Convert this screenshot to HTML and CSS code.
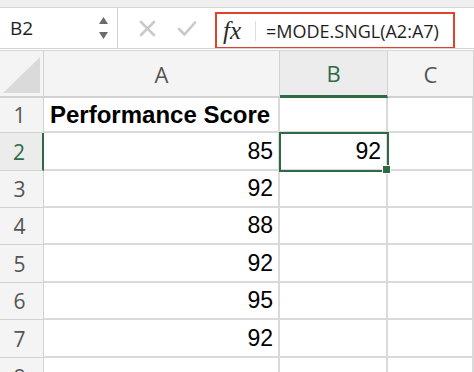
FILE: index.html
```html
<!DOCTYPE html>
<html lang="en">
<head>
    <meta charset="UTF-8">
    <title>MODE.SNGL</title>
    <link rel="stylesheet" href="styles.css">
</head>
<body>
    <div class="top-strip"></div>

    <div class="formula-bar">
        <div class="name-box">
            <span class="name">B2</span>
            <span class="spin">
                <svg width="11" height="26" viewBox="0 0 11 26">
                    <path d="M1 9 L5.5 2 L10 9 Z" fill="#6b6b6b"/>
                    <path d="M1 17 L5.5 24 L10 17 Z" fill="#6b6b6b"/>
                </svg>
            </span>
        </div>
        <div class="actions">
            <svg class="icon-x" width="17" height="17" viewBox="0 0 17 17">
                <path d="M2 2 L15 15 M15 2 L2 15" stroke="#c9c9c9" stroke-width="2.6" stroke-linecap="round"/>
            </svg>
            <svg class="icon-ok" width="20" height="17" viewBox="0 0 20 17">
                <path d="M2 9 L7.5 14.5 L18 2.5" stroke="#c9c9c9" stroke-width="2.6" fill="none" stroke-linecap="round" stroke-linejoin="round"/>
            </svg>
        </div>
        <div class="fx-box">
            <span class="fx">fx</span>
            <span class="divider"></span>
            <span class="formula">=MODE.SNGL(A2:A7)</span>
        </div>
    </div>

    <div class="sheet">
        <div class="corner"><span class="tri"></span></div>
        <div class="col-head">A</div>
        <div class="col-head active">B</div>
        <div class="col-head">C</div>

        <div class="row-head">1</div>
        <div class="cell bold">Performance Score</div>
        <div class="cell"></div>
        <div class="cell"></div>

        <div class="row-head active">2</div>
        <div class="cell num">85</div>
        <div class="cell num selected">92</div>
        <div class="cell"></div>

        <div class="row-head">3</div>
        <div class="cell num">92</div>
        <div class="cell"></div>
        <div class="cell"></div>

        <div class="row-head">4</div>
        <div class="cell num">88</div>
        <div class="cell"></div>
        <div class="cell"></div>

        <div class="row-head">5</div>
        <div class="cell num">92</div>
        <div class="cell"></div>
        <div class="cell"></div>

        <div class="row-head">6</div>
        <div class="cell num">95</div>
        <div class="cell"></div>
        <div class="cell"></div>

        <div class="row-head">7</div>
        <div class="cell num">92</div>
        <div class="cell"></div>
        <div class="cell"></div>

        <div class="row-head">8</div>
        <div class="cell"></div>
        <div class="cell"></div>
        <div class="cell"></div>
    </div>
</body>
</html>
```

FILE: styles.css
```css
* {
    margin: 0;
    padding: 0;
    box-sizing: border-box;
}

body {
    width: 474px;
    height: 372px;
    overflow: hidden;
    background: white;
    font-family: 'Open Sans', 'Liberation Sans', sans-serif;
}

.top-strip {
    height: 8px;
    background: #efefef;
    border-bottom: 1px solid #d8d8d8;
}

.formula-bar {
    display: flex;
    height: 41px;
    border-bottom: 1px solid #d4d4d4;
}

.name-box {
    width: 118px;
    display: flex;
    align-items: center;
    justify-content: space-between;
    padding: 0 8px 0 10px;
    border-right: 1px solid #cfcfcf;
}

.name {
    font-size: 19px;
    color: #1e1e1e;
}

.spin {
    display: flex;
}

.actions {
    width: 97px;
    display: flex;
    align-items: center;
    padding-left: 21px;
    gap: 21px;
}

.fx-box {
    width: 240px;
    margin-top: 4px;
    display: flex;
    align-items: center;
    border: 2px solid #e0412f;
    border-bottom-width: 1px;
}

.fx {
    font-family: 'Liberation Serif', serif;
    font-style: italic;
    font-size: 25px;
    color: #2b2b2b;
    padding-left: 6px;
    width: 38px;
}

.divider {
    width: 1px;
    height: 20px;
    background: #dcdcdc;
}

.formula {
    font-size: 18px;
    color: #1e1e1e;
    padding-left: 10px;
}

.sheet {
    display: grid;
    grid-template-columns: 44px 236px 108px 1fr;
    grid-template-rows: 47px 35px 38px 37px 37px 38px 37px 38px 38px;
    margin-top: 1px;
    border-top: 1px solid #d6d6d6;
}

.corner,
.col-head,
.row-head {
    background: #f4f4f4;
    color: #545454;
    border-right: 1px solid #d2d2d2;
    border-bottom: 2px solid #d2d2d2;
    display: flex;
    align-items: center;
    justify-content: center;
}

.corner {
    padding: 6px 3px 3px 3px;
}

.tri {
    width: 100%;
    height: 100%;
    background: #dadada;
    clip-path: polygon(100% 0, 100% 100%, 0 100%);
}

.col-head {
    font-size: 22px;
}

.col-head.active {
    background: #ececec;
    color: #2e6b45;
    border-bottom: 3px solid #2e6b45;
}

.row-head {
    font-size: 21px;
    border-bottom-width: 1px;
    padding-right: 4px;
}

.row-head.active {
    background: #ececec;
    color: #2e6b45;
    border-right: 2px solid #2e6b45;
}

.cell {
    border-right: 2px solid #dadada;
    border-bottom: 2px solid #dadada;
    font-family: 'Liberation Sans', Arial, sans-serif;
    font-size: 23px;
    color: #000;
    display: flex;
    align-items: center;
    padding: 0 5px;
}

.cell.bold {
    font-weight: bold;
    font-size: 24px;
    padding-left: 6px;
}

.cell.num {
    justify-content: flex-end;
}

.cell.selected {
    position: relative;
    outline: 2px solid #2e6b45;
    outline-offset: -1px;
}

.cell.selected::after {
    content: "";
    position: absolute;
    right: -5px;
    bottom: -5px;
    width: 7px;
    height: 7px;
    background: #2e6b45;
    border: 1px solid white;
}
```
